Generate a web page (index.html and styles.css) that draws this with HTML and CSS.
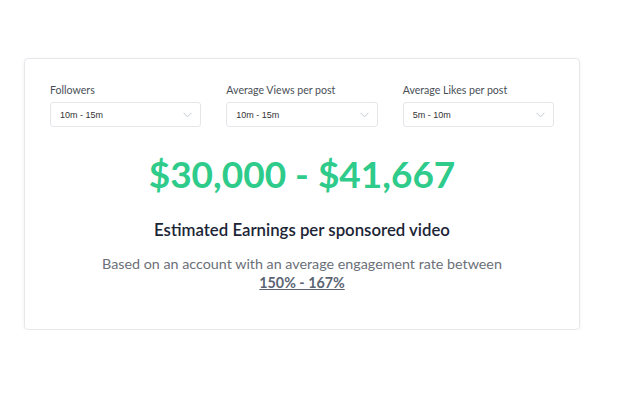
FILE: index.html
```html
<!DOCTYPE html>
<html>
<head>
<meta charset="utf-8">
<link rel="stylesheet" href="styles.css">
</head>
<body>
<div class="card">
  <div class="fields">
    <div class="field">
      <label class="label">Followers</label>
      <div class="select"><span>10m - 15m</span><svg class="chev" width="9" height="6" viewBox="0 0 9 6"><path d="M0.5 0.8 L4.5 4.8 L8.5 0.8" fill="none" stroke="#c4c8cf" stroke-width="1"/></svg></div>
    </div>
    <div class="field">
      <label class="label">Average Views per post</label>
      <div class="select"><span>10m - 15m</span><svg class="chev" width="9" height="6" viewBox="0 0 9 6"><path d="M0.5 0.8 L4.5 4.8 L8.5 0.8" fill="none" stroke="#c4c8cf" stroke-width="1"/></svg></div>
    </div>
    <div class="field">
      <label class="label">Average Likes per post</label>
      <div class="select"><span>5m - 10m</span><svg class="chev" width="9" height="6" viewBox="0 0 9 6"><path d="M0.5 0.8 L4.5 4.8 L8.5 0.8" fill="none" stroke="#c4c8cf" stroke-width="1"/></svg></div>
    </div>
  </div>
  <div class="amount">$30,000 - $41,667</div>
  <div class="subtitle">Estimated Earnings per sponsored video</div>
  <div class="note">Based on an account with an average engagement rate between<br><a class="rate">150% - 167%</a></div>
</div>
</body>
</html>
```

FILE: styles.css
```css
* { box-sizing: border-box; }
body {
  margin: 0;
  background: #fff;
  font-family: Lato, "Open Sans", sans-serif;
}
.card {
  margin: 58px 0 0 24px;
  width: 556px;
  height: 272px;
  border: 1px solid #e6e7eb;
  border-radius: 4px;
  box-shadow: 0 1px 4px rgba(0,0,0,0.05);
  padding: 25px 25px 0 25px;
}
.fields {
  display: flex;
  gap: 25px;
}
.field {
  flex: 1;
  display: flex;
  flex-direction: column;
}
.label {
  font-size: 10.6px;
  color: #4a4f57;
  line-height: 13px;
  height: 18px;
}
.select {
  height: 25px;
  border: 1px solid #e4e6ea;
  border-radius: 3px;
  display: flex;
  align-items: center;
  justify-content: space-between;
  padding: 0 8px 0 9px;
  font-family: "Liberation Sans", Arial, sans-serif;
  font-size: 9px;
  color: #333;
}
.amount {
  margin-top: 22px;
  text-align: center;
  font-size: 37px;
  font-weight: 700;
  color: #2ecb8b;
  line-height: 50px;
}
.subtitle {
  margin-top: 21px;
  text-align: center;
  font-size: 16.8px;
  font-weight: 600;
  color: #1c2536;
  line-height: 20px;
}
.note {
  margin-top: 14px;
  text-align: center;
  font-size: 14.3px;
  color: #6b7078;
  line-height: 19px;
}
.rate {
  font-weight: 700;
  color: #5b6574;
  text-decoration: underline;
}
```
